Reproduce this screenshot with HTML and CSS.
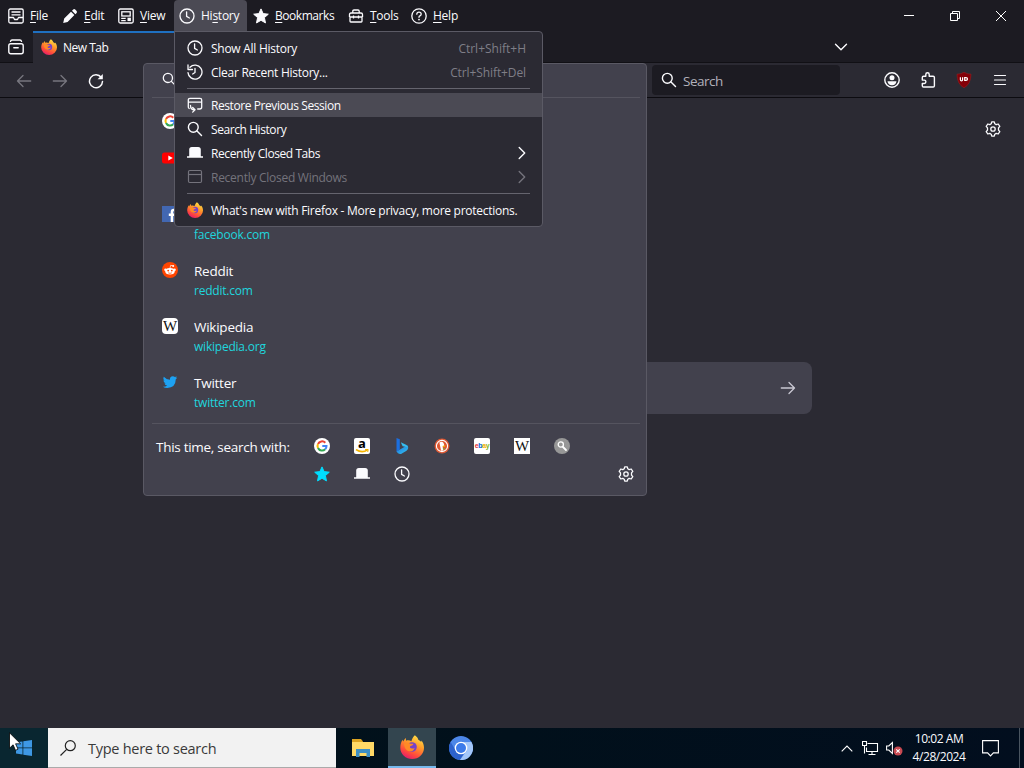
FILE: index.html
```html
<!DOCTYPE html>
<html lang="en">
<head>
  <meta charset="UTF-8">
  <meta name="viewport" content="width=device-width, initial-scale=1.0">
  <title>New Tab</title>
  <link rel="stylesheet" href="styles.css">
</head>
<body>
  <!-- Shared icons -->
  <svg class="sprite" width="0" height="0">
    <defs>
      <linearGradient id="foxBody" x1="0.8" y1="0" x2="0.3" y2="1">
        <stop offset="0" stop-color="#ffe84a"/>
        <stop offset="0.4" stop-color="#ff9a2a"/>
        <stop offset="0.75" stop-color="#ff4a3c"/>
        <stop offset="1" stop-color="#e31b6d"/>
      </linearGradient>
      <linearGradient id="bingFill" x1="0" y1="0" x2="1" y2="1">
        <stop offset="0" stop-color="#1b6fe0"/>
        <stop offset="1" stop-color="#36c8ee"/>
      </linearGradient>
    </defs>
    <symbol id="clock" viewBox="0 0 16 16"><g fill="none" stroke="currentColor" stroke-width="1.3" stroke-linecap="round" stroke-linejoin="round"><circle cx="8" cy="8" r="7"/><path d="M7.6 3.8v4.6l2.8 1.6"/></g></symbol>
    <symbol id="magnifier" viewBox="0 0 16 16"><g fill="none" stroke="currentColor" stroke-width="1.4" stroke-linecap="round"><circle cx="6.3" cy="6.3" r="4.9"/><path d="M10 10l4.500 4.500"/></g></symbol>
    <symbol id="tab" viewBox="0 0 16 16"><path fill="currentColor" d="M2.2 11.2V4.6a2.6 2.6 0 0 1 2.6-2.6h6.4a2.6 2.6 0 0 1 2.6 2.6v6.6H16v1.5H0v-1.5z"/></symbol>
    <symbol id="star" viewBox="0 0 16 16"><path fill="currentColor" stroke="currentColor" stroke-width="1" stroke-linejoin="round" d="M8 .9l2.1 4.7 5.2.6-3.9 3.4 1.1 5.3L8 12.3l-4.5 2.6 1.1-5.3L.7 6.2l5.2-.6z"/></symbol>
    <symbol id="gear" viewBox="0 0 16 16"><g fill="none" stroke="currentColor" stroke-width="1.3" stroke-linejoin="round"><path d="M6.7.8h2.6l.5 2 1.4.8 2-.6 1.6 2.3-1.3 1.6v2.2l1.3 1.6-1.6 2.3-2-.6-1.4.8-.5 2H6.7l-.5-2-1.4-.8-2 .6-1.6-2.3 1.3-1.6V6.900L1.200 5.300 2.800 3l2 .6 1.400-.8z"/><circle cx="8" cy="8" r="2.200"/></g></symbol>
    <symbol id="firefox" viewBox="0 0 16 16"><path fill="url(#foxBody)" d="M9.900.2c1.500 1 2.100 2.100 2.400 3.100.6.100 1.300.6 1.800 1.300l.2-1c1 1.300 1.700 3 1.700 4.900A7.900 7.500 0 0 1 .2 8.500c0-2 .5-3.900 1.500-5.300l.4 1.200C2.700 3.300 3.500 2.300 3.900 2L4 3.800c1.300-.5 2.700-.2 3.600.3C8 2.700 8.700 1.200 9.900.2z"/><circle cx="8" cy="8" r="3.200" fill="#7542c9"/><path fill="#ff8a26" d="M2.700 5.600c1.400-.8 3.200-.6 4.300.2l1.900.1c.1.800-1 1.300-2 1.500l-.3 1c.8.9 2 .8 3.200.2-.4 1.500-1.900 2.500-3.600 2.200C4 10.400 2.800 8.200 2.700 5.600z"/></symbol>
    <symbol id="google" viewBox="0 0 16 16"><circle cx="8" cy="8" r="8" fill="#fff"/><g fill="none" stroke-width="2"><path stroke="#ea4335" d="M11.300 4.700A4.500 4.500 0 0 0 4 6"/><path stroke="#fbbc05" d="M4 6a4.500 4.500 0 0 0 0 4"/><path stroke="#34a853" d="M4 10a4.500 4.500 0 0 0 7.200 1.300"/><path stroke="#4285f4" d="M11.200 11.300A4.500 4.500 0 0 0 12.500 8H8.300"/></g></symbol>
    <symbol id="chevron" viewBox="0 0 16 16"><path fill="none" stroke="currentColor" stroke-width="1.400" stroke-linecap="round" stroke-linejoin="round" d="M5.200 2.500L10.700 8l-5.500 5.500"/></symbol>
    <symbol id="arrow" viewBox="0 0 16 16"><path fill="none" stroke="currentColor" stroke-width="1.300" stroke-linecap="round" stroke-linejoin="round" d="M1.300 8h13.200M9 2.500L14.500 8 9 13.500"/></symbol>
    <symbol id="window" viewBox="0 0 16 16"><g fill="none" stroke="currentColor" stroke-width="1.200"><rect x="1.500" y="1.500" width="13" height="12" rx="1.200"/><path d="M1.500 5.500h13"/></g></symbol>
  </svg>

  <!-- Menu bar -->
  <header class="titlebar">
    <nav class="menubar">
      <div class="menu-item">
        <svg viewBox="0 0 16 16"><g fill="none" stroke="currentColor" stroke-width="1.300" stroke-linejoin="round"><rect x=".8" y="1" width="14.400" height="14" rx="1.500"/><path d="M3.500 4h9M3.500 6.800h9M1 9.500h4.500l1 2h3l1-2H15"/></g></svg>
        <span><u>F</u>ile</span>
      </div>
      <div class="menu-item">
        <svg viewBox="0 0 16 16"><path fill="currentColor" d="M1.200 15l1-4.500 6.800-6.800 3.400 3.400-6.800 6.800zM10 2.800L11.200 1.500q1-.8 2 0l1.400 1.400q.8 1 0 2L13.400 6.200z"/></svg>
        <span><u>E</u>dit</span>
      </div>
      <div class="menu-item">
        <svg viewBox="0 0 16 16"><g fill="none" stroke="currentColor" stroke-width="1.300"><rect x=".8" y="1" width="14.400" height="14" rx="1.500"/><rect x="3.800" y="3.800" width="8.400" height="4.200"/><path d="M3.200 10.300h4.500M3.200 12.600h4.500"/></g><path fill="currentColor" d="M9.500 9.700h3.400v3.400H9.500z"/></svg>
        <span><u>V</u>iew</span>
      </div>
      <div class="menu-item open">
        <svg><use href="#clock"/></svg>
        <span>Hi<u>s</u>tory</span>
      </div>
      <div class="menu-item bookmarks">
        <svg><use href="#star"/></svg>
        <span><u>B</u>ookmarks</span>
      </div>
      <div class="menu-item">
        <svg viewBox="0 0 16 16"><g fill="none" stroke="currentColor" stroke-width="1.300" stroke-linejoin="round"><path d="M4.800 5V3.200q0-1.200 1.200-1.200h4q1.200 0 1.200 1.200V5M1.500 9V6.500Q1.500 5 3 5h10q1.500 0 1.500 1.500V9M1.500 9h13M2 9v4.200q0 .8.800.8h10.400q.8 0 .8-.8V9M5.500 7.500v3M10.500 7.500v3"/></g></svg>
        <span><u>T</u>ools</span>
      </div>
      <div class="menu-item">
        <svg viewBox="0 0 16 16"><g fill="none" stroke="currentColor" stroke-width="1.300" stroke-linecap="round"><circle cx="8" cy="8" r="7.200"/><path d="M5.800 6.200q.1-2.100 2.200-2.100t2.200 1.900q0 1.200-1.300 1.800Q8 8.200 8 9.300"/></g><circle cx="8" cy="11.600" r=".9" fill="currentColor"/></svg>
        <span><u>H</u>elp</span>
      </div>
    </nav>
    <div class="window-buttons">
      <svg viewBox="0 0 10 10"><path d="M0 4.500h10"/></svg>
      <svg viewBox="0 0 10 10"><path d="M.5 2.500h7v7h-7zM2.500 2.500v-2h7v7h-2"/></svg>
      <svg viewBox="0 0 10 10"><path d="M0 0l10 10M10 0L0 10"/></svg>
    </div>
  </header>

  <!-- Tabs -->
  <div class="tabbar">
    <div class="recent-tabs">
      <svg viewBox="0 0 16 16"><g fill="none" stroke="currentColor" stroke-width="1.400" stroke-linecap="round"><rect x=".8" y="4.800" width="14.400" height="10" rx="2"/><path d="M2.500 2.300q.3-1.300 1.600-1.300h7.800q1.300 0 1.600 1.300M5.800 8.700h4.400"/></g></svg>
    </div>
    <div class="browser-tab">
      <svg><use href="#firefox"/></svg>
      <span>New Tab</span>
    </div>
    <svg class="all-tabs"><use href="#chevron"/></svg>
  </div>

  <!-- Navigation toolbar -->
  <div class="toolbar">
    <div class="nav-buttons">
      <svg class="dim flip"><use href="#arrow"/></svg>
      <svg class="dim"><use href="#arrow"/></svg>
      <svg viewBox="0 0 16 16"><path fill="none" stroke="currentColor" stroke-width="1.500" stroke-linecap="round" d="M13.300 4.500A6.500 6.500 0 1 0 14.500 8.500"/><path fill="currentColor" d="M14.800 1v5.200H9.600z"/></svg>
    </div>
    <div class="search-field">
      <svg><use href="#magnifier"/></svg>
      <span>Search</span>
    </div>
    <div class="tool-buttons">
      <svg viewBox="0 0 16 16"><circle cx="8" cy="8" r="7.200" fill="none" stroke="currentColor" stroke-width="1.400"/><circle cx="8" cy="5.800" r="2.500" fill="currentColor"/><path fill="currentColor" d="M3.500 9.300h9q-.6 3.900-4.500 3.900T3.500 9.300z"/></svg>
      <svg viewBox="0 0 16 16"><path fill="none" stroke="currentColor" stroke-width="1.400" stroke-linejoin="round" d="M5.800 4.200V2.400a1.700 1.700 0 0 1 3.400 0v1.800h4q1.200 0 1.200 1.200v8.400q0 1.200-1.200 1.200H3.500q-1.200 0-1.200-1.200v-2.300h1.900a1.700 1.700 0 0 0 0-3.400H2.300V5.400q0-1.200 1.200-1.200z"/></svg>
      <svg viewBox="0 0 16 16"><path fill="#840008" stroke="#a32020" stroke-width=".5" d="M8 .2q3 1.900 7 2-.1 10-7 13.600Q1.100 12.200 1 2.200q4-.1 7-2z"/><path fill="none" stroke="#fff" stroke-width="1.200" d="M4.400 5.200v2.600q0 1.100 1.100 1.100t1.100-1.100V5.200M8.700 5.700h1.200q1.600 0 1.600 1.300T9.900 8.300H8.700z"/></svg>
      <svg viewBox="0 0 16 16"><path fill="none" stroke="currentColor" stroke-width="1.200" stroke-linecap="round" d="M2.500 3.500h11M2.500 8h11M2.500 12.500h11"/></svg>
    </div>
  </div>

  <!-- New tab page -->
  <main class="page">
    <svg class="page-gear"><use href="#gear"/></svg>
    <div class="page-search">
      <svg><use href="#arrow"/></svg>
    </div>
  </main>

  <!-- Address bar results -->
  <section class="urlbar">
    <div class="urlbar-input"><svg><use href="#magnifier"/></svg></div>
    <div class="results">
      <div class="result short"><svg><use href="#google"/></svg></div>
      <div class="result"><svg viewBox="0 0 16 16"><rect y="2.500" width="16" height="11" rx="2.500" fill="#f00"/><path fill="#fff" d="M6.300 5.500v5L10.800 8z"/></svg></div>
      <div class="result">
        <svg viewBox="0 0 16 16"><rect width="16" height="16" fill="#4267b2"/><path fill="#fff" d="M8.700 16v-6H6.800V7.500h1.900V5.800q0-3 3-3h1.800V5h-1.300q-1 0-1 1v1.500h2.200l-.3 2.500h-1.900v6z"/></svg>
        <div class="result-text"><span class="title"></span><span class="url">facebook.com</span></div>
      </div>
      <div class="result">
        <svg viewBox="0 0 16 16"><circle cx="8" cy="8" r="8" fill="#ff4500"/><ellipse cx="8" cy="9.200" rx="4.700" ry="3.300" fill="#fff"/><circle cx="3.400" cy="7.800" r="1.200" fill="#fff"/><circle cx="12.600" cy="7.800" r="1.200" fill="#fff"/><circle cx="11.200" cy="4" r="1" fill="#fff"/><path d="M8 6l.7-2.700 2.300.6" stroke="#fff" stroke-width=".7" fill="none"/><circle cx="6.200" cy="8.600" r=".9" fill="#ff4500"/><circle cx="9.800" cy="8.600" r=".9" fill="#ff4500"/><path d="M6.200 10.800q1.800 1.100 3.600 0" stroke="#ff4500" stroke-width=".7" fill="none"/></svg>
        <div class="result-text"><span class="title">Reddit</span><span class="url">reddit.com</span></div>
      </div>
      <div class="result">
        <span class="wiki rounded">W</span>
        <div class="result-text"><span class="title">Wikipedia</span><span class="url">wikipedia.org</span></div>
      </div>
      <div class="result">
        <svg viewBox="0 0 16 16"><path fill="#1da1f2" d="M15.200 3.400q-.8.400-1.700.5.900-.6 1.200-1.600-.8.500-1.800.7a3 3 0 0 0-5 2.700Q4.200 5.500 1.800 2.700q-1.200 2.500.9 4-.7 0-1.300-.4.100 2.300 2.300 3-.7.200-1.300.1.700 1.900 2.800 2-1.900 1.500-4.400 1.300 2.100 1.300 4.500 1.300 8.300-.4 8.500-8.800.9-.7 1.400-1.800z"/></svg>
        <div class="result-text"><span class="title">Twitter</span><span class="url">twitter.com</span></div>
      </div>
    </div>
    <div class="one-offs">
      <span class="one-offs-label">This time, search with:</span>
      <div class="engines">
        <svg><use href="#google"/></svg>
        <div class="amazon"><span>a</span><svg viewBox="0 0 16 5"><path d="M2 .5q6 4 11.500.3" fill="none" stroke="#f5b400" stroke-width="1.600"/><path d="M11 .5h3.200l-.5 2.500" fill="none" stroke="#f5b400"/></svg></div>
        <svg viewBox="0 0 16 16"><path fill="#1b6fe0" d="M2.500 0l3.300 1.300v10.200L2.500 13.800z"/><path fill="url(#bingFill)" d="M2.500 13.500l10.800-6.300q2.200 3.300-.8 5.500L7 16q-3 .3-4.500-2.500z"/><path fill="#36bdf0" d="M6.800 4.300l5.200 2.400q1.500.8 1.800 2.600L8.600 8.200z"/></svg>
        <svg viewBox="0 0 16 16"><circle cx="8" cy="8" r="7.500" fill="#de5833"/><circle cx="8" cy="8" r="5.600" fill="none" stroke="#fff" stroke-width="1.100"/><path fill="#fff" d="M5.400 4.600q3.400-2 4.600 1.500l.2 1.800-1.600.5.800 4-2.300.3z"/><path fill="#f5b400" d="M8.800 7.800l2.700-.3-.5 1.300-2.100.2z"/><path fill="#65bc46" d="M8.500 10.700l2.300-.7v2.100z"/></svg>
        <span class="ebay"><i>e</i><i>b</i><i>a</i><i>y</i></span>
        <span class="wiki">W</span>
        <svg viewBox="0 0 16 16"><circle cx="8" cy="8" r="8" fill="#979797"/><g fill="none" stroke="#fff" stroke-linecap="round"><circle cx="6.800" cy="6.500" r="2.600" stroke-width="1.300"/><path stroke-width="1.800" d="M9 9l3 3"/></g></svg>
        <svg class="bookmarked"><use href="#star"/></svg>
        <svg><use href="#tab"/></svg>
        <svg><use href="#clock"/></svg>
      </div>
      <svg class="one-offs-gear"><use href="#gear"/></svg>
    </div>
  </section>

  <!-- History menu -->
  <div class="history-menu">
    <div class="entry"><svg><use href="#clock"/></svg><span>Show All History</span><kbd>Ctrl+Shift+H</kbd></div>
    <div class="entry">
      <svg viewBox="0 0 16 16"><g fill="none" stroke="currentColor" stroke-width="1.300" stroke-linecap="round" stroke-linejoin="round"><path d="M3 3.200A7 7 0 1 1 1 8.600M1 1v4.500h4.500M8 4.500v4L5.700 10"/></g></svg>
      <span>Clear Recent History...</span><kbd class="del">Ctrl+Shift+Del</kbd>
    </div>
    <hr>
    <div class="entry hover">
      <svg viewBox="0 0 16 16"><g fill="none" stroke="currentColor" stroke-width="1.300" stroke-linecap="round" stroke-linejoin="round"><path d="M2.200 11.500Q1.300 11.200 1.300 10V3q0-1.700 1.700-1.700h10q1.700 0 1.700 1.700v7q0 2-2 2h-2M1.300 5.200h13.400M3.500 8.500q0 4.300 4 4.300M5.700 10.500L8 12.800l-2.300 2.300"/></g></svg>
      <span class="tight">Restore Previous Session</span>
    </div>
    <div class="entry"><svg><use href="#magnifier"/></svg><span class="tight">Search History</span></div>
    <div class="entry"><svg><use href="#tab"/></svg><span class="tight">Recently Closed Tabs</span><svg class="more"><use href="#chevron"/></svg></div>
    <div class="entry disabled"><svg><use href="#window"/></svg><span>Recently Closed Windows</span><svg class="more"><use href="#chevron"/></svg></div>
    <hr>
    <div class="entry"><svg><use href="#firefox"/></svg><span>What's new with Firefox - More privacy, more protections.</span></div>
  </div>

  <!-- Taskbar -->
  <footer class="taskbar">
    <div class="start">
      <svg viewBox="0 0 16 16"><path fill="#3e98e4" d="M0 2.300l6.500-.9v6.100H0zM7.300 1.300L16 0v7.500H7.300zM0 8.300h6.500v6.200L0 13.600zM7.300 8.300H16V16l-8.700-1.300z"/></svg>
    </div>
    <div class="task-search">
      <svg viewBox="0 0 16 16"><g fill="none" stroke="#222" stroke-width="1.200"><circle cx="10.300" cy="5.700" r="5"/><path d="M6.700 9.300L.5 15.500"/></g></svg>
      <span>Type here to search</span>
    </div>
    <div class="task-apps">
      <div class="task"><svg viewBox="0 0 22 18"><path fill="#dca321" d="M0 0h9l2 2.500V7H0z"/><path fill="#ffd966" d="M0 3h22v14H0z"/><path fill="#3d8fc4" d="M4 10h14v8h-3.500v-4h-7v4H4z"/></svg></div>
      <div class="task active"><svg><use href="#firefox"/></svg></div>
      <div class="task"><svg viewBox="0 0 24 24"><circle cx="12" cy="12" r="12" fill="#4c87e8"/><path fill="#2d62cc" d="M1.600 6A12 12 0 0 0 11 24l5-8.500L6.500 14z"/><path fill="#a3c7fa" d="M12 6h10.400A12 12 0 0 1 11 24l6.500-9z"/><circle cx="12" cy="12" r="6.300" fill="#fff"/><circle cx="12" cy="12" r="5" fill="#3c7bea"/></svg></div>
    </div>
    <div class="tray">
      <svg class="tray-up" viewBox="0 0 12 7"><path d="M.7 6.300L6 1l5.300 5.300"/></svg>
      <svg class="tray-net" viewBox="0 0 17 15"><path d="M5.500 2.500h10v8h-11V6.500M10 10.500v3M6.500 13.500h7M.5.500h4v4h-4zM2.500 4.500v8"/></svg>
      <svg class="tray-sound" viewBox="0 0 17 15"><path d="M.6 5h2.200L6.400 1.500v11L2.800 9H.6z"/><circle cx="12" cy="10" r="4.500"/><path d="M10.300 8.300l3.400 3.400M13.700 8.300l-3.400 3.400"/></svg>
      <div class="datetime"><span>10:02 AM</span><span>4/28/2024</span></div>
      <svg class="tray-note" viewBox="0 0 17 17"><path d="M.6.600h15.800v12.300h-5L8.500 16l-2.900-3.100h-5z"/></svg>
    </div>
  </footer>

  <svg class="cursor" viewBox="0 0 12 19"><path fill="#fff" stroke="#000" stroke-width=".8" d="M.5.800v15.400l3.600-3.400 2.400 5.500 2.500-1.100-2.400-5.400h5z"/></svg>
</body>
</html>
```
FILE: styles.css
```css
* {
  box-sizing: border-box;
}
body {
  position: relative;
  margin: 0;
  width: 1024px;
  height: 768px;
  overflow: hidden;
  display: flex;
  flex-direction: column;
  background-color: #2b2a33;
  color: #fbfbfe;
  font-family: "Open Sans", "Noto Sans", sans-serif;
  font-size: 12px;
}
svg {
  width: 16px;
  height: 16px;
  flex: none;
  display: block;
}
span, kbd {
  white-space: nowrap;
}
.sprite {
  position: absolute;
  width: 0;
  height: 0;
}

/* Title bar */
.titlebar {
  height: 31px;
  display: flex;
  justify-content: space-between;
  background-color: #1c1b22;
}
.menubar {
  display: grid;
  grid-template-columns: 54px 56px 61px 74px 95px 63px 60px;
  margin-left: 4px;
  letter-spacing: -0.25px;
}
.menu-item {
  display: flex;
  align-items: center;
  gap: 6px;
  padding-left: 4px;
  margin-right: 2px;
}
.menu-item.open {
  margin-left: -1px;
  padding-left: 5px;
  background-color: #4b4a54;
  border-radius: 4px 4px 0 0;
}
.menu-item.bookmarks {
  letter-spacing: -0.45px;
}
.menu-item u {
  text-underline-offset: 2px;
}
.window-buttons {
  display: flex;
}
.window-buttons svg {
  width: 46px;
  height: 10px;
  margin-top: 11px;
  fill: none;
  stroke: #fff;
  stroke-width: 1;
}

/* Tabs */
.tabbar {
  height: 32px;
  display: flex;
  background-color: #1c1b22;
  border-bottom: 1px solid #111015;
}
.recent-tabs {
  width: 33px;
  padding: 8px;
}
.browser-tab {
  width: 225px;
  height: 32px;
  display: flex;
  align-items: center;
  gap: 6px;
  padding: 0 0 2px 8px;
  background-color: #2b2a33;
  border-top: 2px solid #1f70c1;
  letter-spacing: -0.5px;
}
.all-tabs {
  margin: 8px 175px 0 auto;
  transform: rotate(90deg);
}

/* Toolbar */
.toolbar {
  height: 35px;
  display: flex;
  align-items: center;
  background-color: #2b2a33;
  border-bottom: 1px solid #0c0b10;
}
.nav-buttons {
  display: flex;
  gap: 20px;
  margin: 1px 0 0 16px;
}
.dim {
  color: #77767f;
}
.flip {
  transform: scaleX(-1);
}
.search-field {
  width: 188px;
  height: 30px;
  margin-left: 548px;
  display: flex;
  align-items: center;
  gap: 6px;
  padding-left: 9px;
  border-radius: 4px;
  background-color: #1c1b22;
}
.search-field span {
  padding-top: 1px;
  color: #b2b1ba;
  font-size: 13.5px;
  letter-spacing: -0.5px;
}
.tool-buttons {
  display: flex;
  gap: 20px;
  margin-left: 44px;
}

/* New tab page */
.page {
  height: 630px;
  display: flex;
  flex-direction: column;
}
.page-gear {
  margin: 23px 23px 0 auto;
}
.page-search {
  width: 600px;
  height: 52px;
  margin: 225px 0 0 212px;
  padding-right: 16px;
  display: flex;
  align-items: center;
  justify-content: flex-end;
  border-radius: 8px;
  background-color: #42414d;
  color: #c9c8d2;
}

/* Address bar results */
.urlbar {
  position: absolute;
  left: 143px;
  top: 63px;
  width: 504px;
  height: 433px;
  border: 1px solid #5a5964;
  border-radius: 4px;
  background-color: #42414d;
}
.urlbar-input {
  height: 34px;
  margin: 0 6px 0 8px;
  padding: 8px 0 0 10px;
  border-bottom: 1px solid #55545f;
}
.urlbar-input svg {
  width: 15px;
  height: 15px;
}
.results {
  height: 325px;
  padding: 4px 0 0 18px;
}
.result {
  height: 56px;
  display: flex;
  gap: 16px;
  padding-top: 10px;
}
.result.short {
  height: 38px;
  padding-top: 11px;
}
.result-text {
  display: flex;
  flex-direction: column;
}
.title {
  height: 19px;
  line-height: 18px;
  font-size: 13.5px;
  letter-spacing: -0.25px;
}
.url {
  line-height: 20px;
  font-size: 12px;
  letter-spacing: -0.22px;
  color: #1fd5dd;
}
.wiki {
  width: 16px;
  height: 16px;
  background-color: #fff;
  color: #111;
  font: 15px/16px "Liberation Serif", serif;
  letter-spacing: -1px;
  text-align: center;
  text-indent: -1px;
}
.wiki.rounded {
  border-radius: 4px;
}
.one-offs {
  height: 72px;
  margin: 0 6px 0 8px;
  padding: 14px 6px 0 4px;
  display: flex;
  border-top: 1px solid #55545f;
}
.one-offs-label {
  width: 158px;
  line-height: 18px;
  font-size: 13.5px;
  letter-spacing: -0.28px;
}
.engines {
  display: grid;
  grid-template-columns: repeat(7, 40px);
  grid-auto-rows: 28px;
}
.bookmarked {
  color: #00ddff;
}
.one-offs-gear {
  margin: 28px 0 0 auto;
}
.amazon, .ebay {
  width: 16px;
  height: 16px;
  border-radius: 2px;
  background-color: #fff;
}
.amazon {
  display: flex;
  flex-direction: column;
  align-items: center;
  color: #000;
  font: bold 13px/11px "Open Sans", sans-serif;
}
.amazon svg {
  height: 5px;
}
.ebay {
  font: bold 7px/15px "Liberation Sans", sans-serif;
  text-align: center;
  letter-spacing: -0.4px;
}
.ebay i {
  font-style: normal;
}
.ebay i:nth-child(1) { color: #e53238; }
.ebay i:nth-child(2) { color: #0064d2; }
.ebay i:nth-child(3) { color: #f5af02; }
.ebay i:nth-child(4) { color: #86b817; }

/* History menu */
.history-menu {
  position: absolute;
  left: 174px;
  top: 31px;
  width: 369px;
  height: 196px;
  padding: 4px 0;
  border: 1px solid #5b5a65;
  border-radius: 0 4px 4px 4px;
  background-color: #2b2a33;
}
.entry {
  height: 24px;
  display: flex;
  align-items: center;
  gap: 8px;
  padding: 0 16px 0 12px;
  letter-spacing: -0.27px;
}
.entry.hover {
  background-color: #4b4a54;
}
.entry.disabled {
  color: #74737c;
}
.entry .tight {
  letter-spacing: -0.42px;
}
.entry kbd {
  margin-left: auto;
  color: #7f7e87;
  font: inherit;
  letter-spacing: 0;
}
.entry kbd.del {
  letter-spacing: -0.1px;
}
.entry .more {
  margin: 0 -4px 0 auto;
}
.history-menu hr {
  height: 1px;
  margin: 4px 12px;
  border: none;
  background-color: #65646e;
}

/* Taskbar */
.taskbar {
  height: 40px;
  display: flex;
  background: linear-gradient(90deg, #02131b, #01101b 50%, #020e1e);
}
.start {
  width: 48px;
  padding: 12px 16px;
  background-color: #092630;
}
.task-search {
  width: 288px;
  display: flex;
  align-items: center;
  gap: 12px;
  padding-left: 12px;
  background-color: #f2f2f2;
  border-bottom: 1px solid #aaa;
  color: #3a3a3a;
  font-size: 14.5px;
  letter-spacing: -0.27px;
}
.task-search span {
  padding-top: 2px;
}
.task-apps {
  display: flex;
  margin-left: 3px;
}
.task {
  width: 49px;
  display: flex;
  align-items: center;
  justify-content: center;
}
.task svg {
  width: 24px;
  height: 24px;
}
.task:first-child {
  padding-right: 2px;
}
.task:first-child svg {
  width: 22px;
  height: 18px;
}
.task.active {
  width: 48px;
  background-color: #33454f;
  border-bottom: 2px solid #76b9ed;
}
.tray {
  flex: 1;
  display: flex;
  align-items: center;
  margin-right: 4px;
  border-right: 1px solid #4a5560;
}
.tray svg {
  fill: none;
  stroke: #fff;
  stroke-width: 1.1;
}
.tray .tray-up {
  width: 12px;
  height: 7px;
  margin-left: 356px;
}
.tray .tray-net {
  width: 17px;
  height: 15px;
  margin-left: 9px;
}
.tray .tray-sound {
  width: 17px;
  height: 15px;
  margin-left: 7px;
}
.tray .tray-sound circle {
  fill: #c94a52;
  stroke: none;
}
.datetime {
  width: 74px;
  display: flex;
  flex-direction: column;
  align-items: center;
  margin-left: -1px;
  line-height: 18px;
  font-size: 12px;
  letter-spacing: -0.45px;
}
.tray .tray-note {
  width: 17px;
  height: 17px;
  margin-left: 6px;
}

.cursor {
  position: absolute;
  left: 9px;
  top: 732px;
  width: 12px;
  height: 19px;
}
```
